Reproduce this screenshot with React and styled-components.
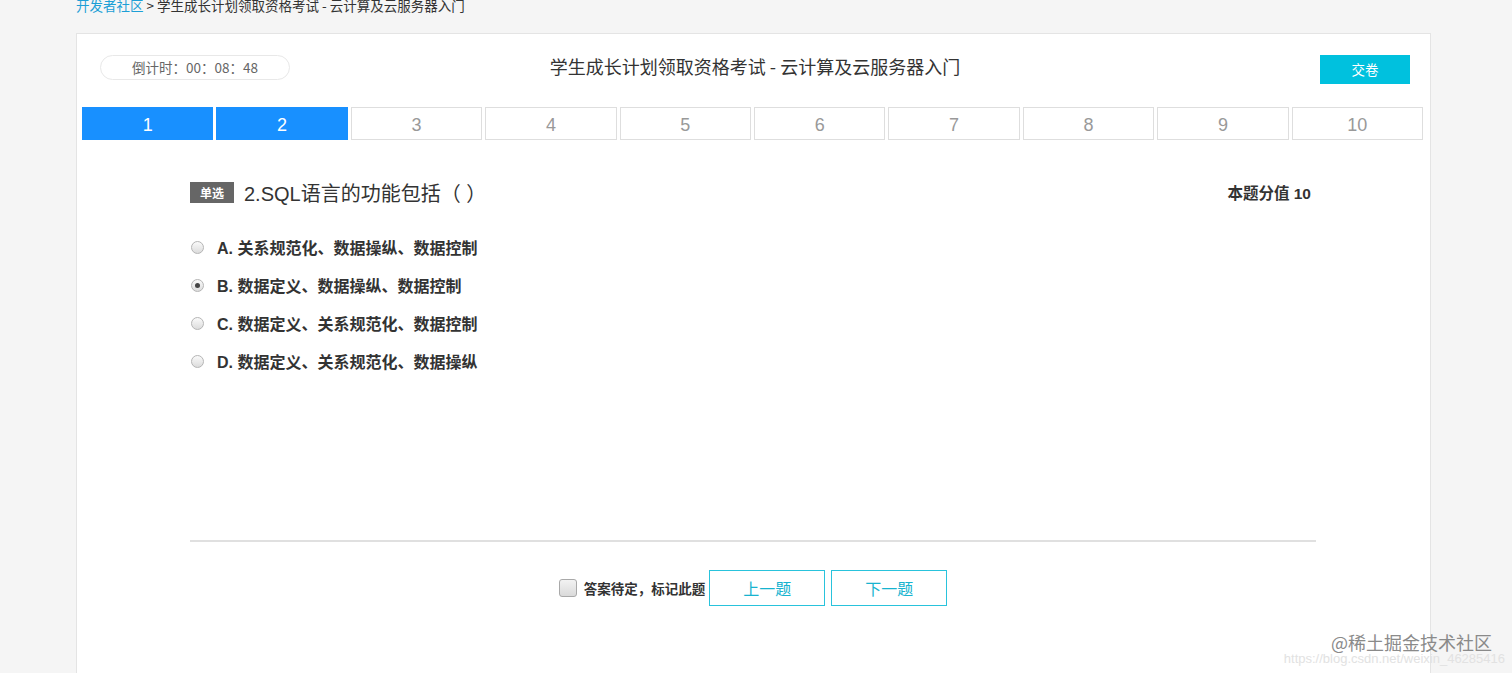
import styled, { createGlobalStyle } from "styled-components";

const GlobalStyle = createGlobalStyle`
  html, body {
    margin: 0;
    padding: 0;
    background: #f5f5f5;
    font-family: "Liberation Sans", "Noto Sans CJK SC", sans-serif;
    overflow: hidden;
  }
`;

const tabs = [1, 2, 3, 4, 5, 6, 7, 8, 9, 10];
const options = [
    { key: "A", text: "关系规范化、数据操纵、数据控制" },
    { key: "B", text: "数据定义、数据操纵、数据控制", checked: true },
    { key: "C", text: "数据定义、关系规范化、数据控制" },
    { key: "D", text: "数据定义、关系规范化、数据操纵" },
];

export default function App() {
    return (
        <Page>
            <GlobalStyle />
            <Breadcrumb>
                <a>开发者社区</a> &gt; 学生成长计划领取资格考试 - 云计算及云服务器入门
            </Breadcrumb>
            <Card>
                <Header>
                    <Timer>倒计时：00：08：48</Timer>
                    <Title>学生成长计划领取资格考试 - 云计算及云服务器入门</Title>
                    <SubmitCell>
                        <SubmitButton>交卷</SubmitButton>
                    </SubmitCell>
                </Header>
                <TabBar>
                    {tabs.map((n) => (
                        <Tab key={n} $active={n <= 2}>
                            {n}
                        </Tab>
                    ))}
                </TabBar>
                <Body>
                    <QuestionRow>
                        <Badge>单选</Badge>
                        <QuestionText>2.SQL语言的功能包括（ ）</QuestionText>
                        <Score>本题分值 10</Score>
                    </QuestionRow>
                    <OptionList>
                        {options.map((o) => (
                            <Option key={o.key}>
                                <Radio $checked={o.checked} />
                                <OptionLabel>
                                    {o.key}. {o.text}
                                </OptionLabel>
                            </Option>
                        ))}
                    </OptionList>
                    <Divider />
                    <Footer>
                        <MarkBox />
                        <MarkText>答案待定，标记此题</MarkText>
                        <NavButton>上一题</NavButton>
                        <NavButton>下一题</NavButton>
                    </Footer>
                </Body>
            </Card>
            <Watermark>
                <div className="brand">@稀土掘金技术社区</div>
                <div className="url">https://blog.csdn.net/weixin_46285416</div>
            </Watermark>
        </Page>
    );
}

const Page = styled.div`
    position: relative;
    height: 673px;
    overflow: hidden;
    padding-left: 76px;
`;

const Breadcrumb = styled.div`
    font-family: "Noto Sans CJK SC", sans-serif;
    font-size: 13.5px;
    line-height: 14px;
    color: #333;
    margin-top: -2px;
    a {
        color: #1d9fd6;
    }
`;

const Card = styled.div`
    margin-top: 21px;
    width: 1353px;
    height: 700px;
    background: #fff;
    border: 1px solid #e4e4e4;
`;

const Header = styled.div`
    display: grid;
    grid-template-columns: 1fr auto 1fr;
    align-items: start;
    height: 52px;
    padding: 21px 20px 0 23px;
`;

const Timer = styled.div`
    justify-self: start;
    width: 188px;
    height: 23px;
    line-height: 23px;
    border: 1px solid #e8e8e8;
    border-radius: 13px;
    text-align: center;
    font-size: 13.5px;
    color: #666;
    font-family: "Noto Sans CJK SC", sans-serif;
`;

const Title = styled.div`
    font-family: "Noto Sans CJK SC", sans-serif;
    font-size: 18px;
    line-height: 22px;
    color: #333;
`;

const SubmitCell = styled.div`
    justify-self: end;
`;

const SubmitButton = styled.div`
    width: 90px;
    height: 29px;
    line-height: 29px;
    text-align: center;
    background: #00c1de;
    color: #fff;
    font-size: 13.5px;
    font-family: "Noto Sans CJK SC", sans-serif;
`;

const TabBar = styled.div`
    display: grid;
    grid-template-columns: repeat(10, 1fr);
    gap: 3px;
    padding: 0 7px 0 5px;
`;

const Tab = styled.div`
    height: 27px;
    padding-top: 4px;
    line-height: 27px;
    text-align: center;
    font-size: 18px;
    border: 1px solid ${(p) => (p.$active ? "#1890ff" : "#dedede")};
    background: ${(p) => (p.$active ? "#1890ff" : "#fff")};
    color: ${(p) => (p.$active ? "#fff" : "#999")};
`;

const Body = styled.div`
    padding: 0 114px 0 113px;
`;

const QuestionRow = styled.div`
    display: flex;
    align-items: center;
    height: 24px;
    margin-top: 40px;
    padding-right: 5px;
`;

const Badge = styled.span`
    width: 44px;
    height: 21px;
    line-height: 21px;
    text-align: center;
    background: #666;
    color: #fff;
    font-size: 12px;
    font-weight: bold;
    font-family: "Noto Sans CJK SC", sans-serif;
    margin-right: 10px;
`;

const QuestionText = styled.span`
    flex: 1;
    font-size: 20px;
    color: #333;
`;

const Score = styled.span`
    font-size: 15.5px;
    font-weight: bold;
    color: #333;
`;

const OptionList = styled.div`
    margin-top: 24px;
`;

const Option = styled.div`
    display: flex;
    align-items: center;
    height: 38px;
`;

const Radio = styled.span`
    position: relative;
    box-sizing: border-box;
    width: 13px;
    height: 13px;
    margin-left: 1px;
    border-radius: 50%;
    border: 1px solid #b5b5b5;
    background: linear-gradient(#fafafa, #dcdcdc);
    margin-right: 13px;
    &::after {
        content: "";
        display: ${(p) => (p.$checked ? "block" : "none")};
        position: absolute;
        left: 3px;
        top: 3px;
        width: 5px;
        height: 5px;
        border-radius: 50%;
        background: #444;
    }
`;

const OptionLabel = styled.span`
    font-size: 16px;
    font-weight: bold;
    color: #333;
`;

const Divider = styled.div`
    margin-top: 160px;
    height: 2px;
    background: #e0e0e0;
`;

const Footer = styled.div`
    display: flex;
    align-items: center;
    justify-content: center;
    margin-top: 28px;
`;

const MarkBox = styled.span`
    box-sizing: border-box;
    width: 18px;
    height: 18px;
    border-radius: 3px;
    border: 1px solid #a9a9a9;
    background: linear-gradient(#f2f2f2, #dadada);
    margin-right: 7px;
`;

const MarkText = styled.span`
    font-size: 13.5px;
    font-weight: bold;
    color: #333;
    font-family: "Noto Sans CJK SC", sans-serif;
    margin-right: 4px;
`;

const NavButton = styled.div`
    box-sizing: border-box;
    width: 116px;
    height: 36px;
    line-height: 34px;
    text-align: center;
    border: 1px solid #29c3dc;
    color: #17b3cf;
    font-size: 16px;
    font-family: "Noto Sans CJK SC", sans-serif;
    & + & {
        margin-left: 6px;
    }
`;

const Watermark = styled.div`
    position: absolute;
    right: 7px;
    top: 631px;
    text-align: right;
    font-family: "Noto Sans CJK SC", sans-serif;
    .brand {
        font-size: 18px;
        line-height: 22px;
        color: #8a8a8a;
        padding-right: 13px;
    }
    .url {
        font-family: "Liberation Sans", sans-serif;
        font-size: 13px;
        line-height: 14px;
        color: #e2e2e2;
        margin-top: -1px;
    }
`;
